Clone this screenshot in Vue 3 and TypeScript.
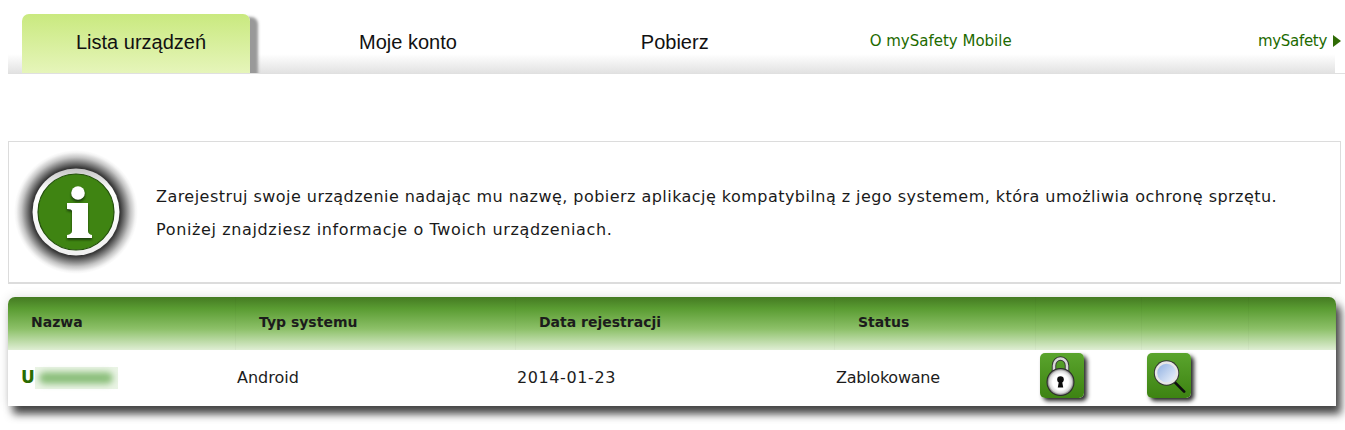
<script setup lang="ts">
interface Col {
  label: string;
  width: number;
}

const columns: Col[] = [
  { label: 'Nazwa', width: 228 },
  { label: 'Typ systemu', width: 280 },
  { label: 'Data rejestracji', width: 319 },
  { label: 'Status', width: 201 },
  { label: '', width: 106 },
  { label: '', width: 107 },
  { label: '', width: 87 },
];
</script>

<template>
  <div class="page">
    <nav class="nav">
      <a class="tab tab--active">Lista urządzeń</a>
      <a class="tab tab--account">Moje konto</a>
      <a class="tab tab--download">Pobierz</a>
      <a class="link link--about">O mySafety Mobile</a>
      <a class="link link--home">mySafety<span class="arrow"></span></a>
    </nav>

    <section class="info">
      <svg class="info__icon" width="126" height="126" viewBox="0 0 126 126">
        <defs>
          <radialGradient id="halo">
            <stop offset="0.66" stop-color="#222" />
            <stop offset="0.72" stop-color="#3c3c3c" />
            <stop offset="0.8" stop-color="#808080" />
            <stop offset="0.88" stop-color="#c4c4c4" />
            <stop offset="0.96" stop-color="#f4f4f4" />
            <stop offset="1" stop-color="#fff" />
          </radialGradient>
          <linearGradient id="ring" x1="0" y1="0" x2="0" y2="1">
            <stop offset="0" stop-color="#c4c4c4" />
            <stop offset="0.25" stop-color="#fff" />
            <stop offset="1" stop-color="#f0f0f0" />
          </linearGradient>
          <filter id="soft" x="-20%" y="-20%" width="140%" height="140%">
            <feGaussianBlur stdDeviation="0.8" />
          </filter>
        </defs>
        <circle cx="63" cy="63" r="62" fill="url(#halo)" />
        <circle cx="63" cy="63" r="43.5" fill="url(#ring)" />
        <circle cx="63" cy="63" r="38" fill="#3f8412" stroke="#22500a" stroke-width="1.2" />
        <g fill="#1d3f08" filter="url(#soft)" transform="translate(0 2)">
          <circle cx="65" cy="44" r="7" />
          <path d="M54 54h21v28q0 3 4 4v3H54v-3q5-1 5-4V62q0-2-5-2z" />
        </g>
        <circle cx="65" cy="44" r="6.8" fill="#fff" />
        <path d="M54 54h21v28q0 3 4 4v3H54v-3q5-1 5-4V62q0-2-5-2z" fill="#fff" />
      </svg>
      <div class="info__text">
        <p class="line-one">Zarejestruj swoje urządzenie nadając mu nazwę, pobierz aplikację kompatybilną z jego systemem, która umożliwia ochronę sprzętu.</p>
        <p class="line-two">Poniżej znajdziesz informacje o Twoich urządzeniach.</p>
      </div>
    </section>

    <section class="table">
      <div class="table__head">
        <div v-for="(c, i) in columns" :key="i" class="th" :style="{ width: c.width + 'px' }">{{ c.label }}</div>
      </div>
      <div class="table__row">
        <div class="td td--name">
          <b>U</b><span class="blur"><i></i></span>
        </div>
        <div class="td td--system">Android</div>
        <div class="td td--date">2014-01-23</div>
        <div class="td td--status">Zablokowane</div>
        <div class="td td--lock">
          <span class="btn">
            <svg width="44" height="45" viewBox="0 0 44 45">
              <defs>
                <radialGradient id="lockFace">
                  <stop offset="0.6" stop-color="#fff" />
                  <stop offset="0.85" stop-color="#d8d8d8" />
                  <stop offset="1" stop-color="#777" />
                </radialGradient>
              </defs>
              <path d="M14 22V12.5a6.5 7 0 0 1 13 0V22" fill="none" stroke="#333" stroke-width="4.4" />
              <path d="M14 22V12.5a6.5 7 0 0 1 13 0V22" fill="none" stroke="#d8d8d8" stroke-width="2.6" />
              <circle cx="20.500" cy="29" r="14" fill="#2b2b2b" />
              <circle cx="20.500" cy="29" r="13" fill="url(#lockFace)" />
              <circle cx="20.500" cy="26.500" r="3.300" fill="#0c0c0c" />
              <path d="M19 28h3l1.200 6.500h-5.400z" fill="#0c0c0c" />
            </svg>
          </span>
        </div>
        <div class="td td--search">
          <span class="btn">
            <svg width="45" height="45" viewBox="0 0 45 45">
              <defs>
                <linearGradient id="lens" x1="0" y1="0" x2="1" y2="1">
                  <stop offset="0" stop-color="#8fb0e2" />
                  <stop offset="1" stop-color="#f0f4fb" />
                </linearGradient>
              </defs>
              <path d="M28 29l10 10" stroke="#0f0f0f" stroke-width="2.800" stroke-linecap="round" />
              <circle cx="20" cy="20" r="13" fill="#333" />
              <circle cx="20" cy="20" r="12" fill="#e6e6e6" />
              <circle cx="20" cy="20" r="9.500" fill="url(#lens)" />
            </svg>
          </span>
        </div>
      </div>
    </section>
  </div>
</template>

<style scoped>
.page {
  width: 1345px;
  height: 430px;
  box-sizing: border-box;
  padding: 13px 0 0 8px;
  overflow: hidden;
  background: #fff;
  font-family: "DejaVu Sans", sans-serif;
  color: #1c1c1c;
}

.nav {
  display: flex;
  width: 1337px;
  height: 61px;
  box-sizing: border-box;
  overflow: hidden;
  background: linear-gradient(#fff 0, #fff 41px, #e2e2e2 60px) no-repeat;
  background-size: 1327px 100%;
  border-bottom: 1px solid #e0e0e0;
}

.tab {
  font-family: "Liberation Sans", sans-serif;
  font-size: 20px;
  line-height: 58px;
  color: #111;
}

.tab--active {
  margin-left: 14px;
  margin-top: 1px;
  width: 228px;
  height: 59px;
  line-height: 57px;
  box-sizing: border-box;
  padding-left: 54px;
  border-radius: 7px 7px 0 0;
  background: linear-gradient(#c9e97f, #e6f5ba);
  box-shadow: 8px 3px 3px #999;
}

.tab--account {
  margin-left: 109px;
}

.tab--download {
  margin-left: 184px;
}

.link {
  font-size: 15px;
  line-height: 56px;
  color: #1d6a00;
}

.link--about {
  margin-left: 161px;
}

.link--home {
  margin-left: auto;
  margin-right: 4px;
  display: flex;
  align-items: center;
  gap: 6px;
  height: 56px;
  letter-spacing: -0.3px;
}

.arrow {
  width: 0;
  height: 0;
  border-left: 8px solid #2f6b05;
  border-top: 6px solid transparent;
  border-bottom: 6px solid transparent;
}

.info {
  display: flex;
  align-items: center;
  width: 1333px;
  height: 143px;
  box-sizing: border-box;
  margin-top: 67px;
  padding-left: 4px;
  border: 1px solid #dcdcdc;
  border-bottom-width: 2px;
}

.info__icon {
  flex: none;
}

.info__text {
  margin-left: 17px;
  padding-top: 2px;
  font-size: 16px;
  line-height: 33px;
  color: #1a1a1a;
}

.info__text p {
  margin: 0;
  white-space: nowrap;
}

.line-one {
  letter-spacing: 0.46px;
}

.line-two {
  letter-spacing: 0.63px;
}

.table {
  width: 1328px;
  margin-top: 13px;
  border-radius: 7px 7px 0 0;
  box-shadow: 5px 8px 9px rgba(0, 0, 0, 0.72), 0 0 12px rgba(0, 0, 0, 0.12);
  background: #fff;
}

.table__head {
  display: flex;
  height: 53px;
  border-radius: 7px 7px 0 0;
  background: linear-gradient(#447a22 0, #5a9c32 22%, #8cc068 60%, #dfeed4 100%);
}

.th {
  box-sizing: border-box;
  padding: 17px 0 0 23px;
  font-size: 14px;
  font-weight: bold;
  line-height: 17px;
  color: #1c1c1c;
  border-right: 1px solid rgba(0, 0, 0, 0.025);
}

.table__row {
  display: flex;
  height: 56px;
  align-items: center;
}

.td {
  box-sizing: border-box;
  flex: none;
  font-size: 16px;
  line-height: 19px;
  padding-bottom: 1px;
}

.td--name {
  display: flex;
  align-items: center;
  width: 229px;
  padding-left: 13px;
}

.td--name b {
  color: #2b6b00;
  font-size: 17px;
}

.blur {
  display: flex;
  align-items: center;
  justify-content: center;
  width: 83px;
  height: 22px;
  background: #eaf4e5;
}

.blur i {
  display: block;
  width: 74px;
  height: 12px;
  border-radius: 6px;
  background: #8cbf7c;
  filter: blur(3px);
}

.td--system {
  width: 280px;
}

.td--date {
  width: 319px;
  letter-spacing: 0.6px;
}

.td--status {
  width: 204px;
  letter-spacing: -0.25px;
}

.td--lock,
.td--search {
  display: flex;
  align-self: flex-start;
  padding: 3px 0 0;
}

.td--lock {
  width: 107px;
}

.btn {
  display: flex;
  width: 44px;
  height: 45px;
  border-radius: 5px;
  background: linear-gradient(#5aa42d, #3d8312);
  box-shadow: 3px 3px 4px rgba(0, 0, 0, 0.85);
}
</style>

<style>
html, body {
  margin: 0;
  background: #fff;
}
</style>
